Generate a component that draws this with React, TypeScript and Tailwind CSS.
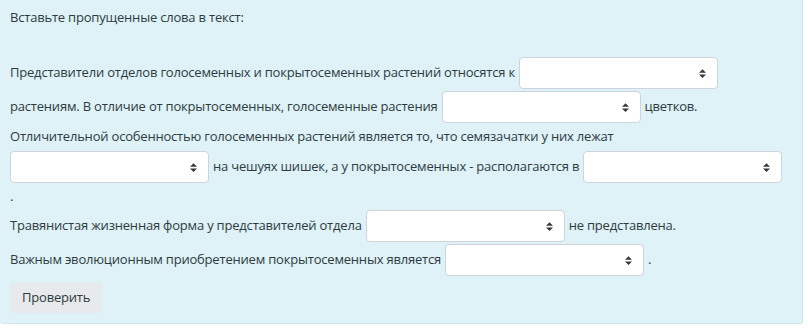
function Arrows() {
    return (
        <svg width="7" height="9" viewBox="0 0 4 5" className="shrink-0">
            <path d="M2 0L0 2h4zm0 5L0 3h4z" fill="#343a40"/>
        </svg>
    )
}

function Gap() {
    return (
        <div className="w-[199px] h-[32px] shrink-0 bg-white border border-[#ced4da] rounded-[4px] flex items-center justify-end pr-[11px]">
            <Arrows/>
        </div>
    )
}

export default function App() {
    return (
        <div className="w-[808px] h-[333px] bg-white">
            <div
                className="w-[803px] h-[324px] bg-[#def2f8] border-r border-b border-[#d3e6ec] rounded-b-[3px] px-[10px] pt-[7px] text-[13px] tracking-[-0.2px] text-[#2f3b3e] whitespace-nowrap"
                style={{fontFamily: '"Segoe UI", "Open Sans", sans-serif'}}
            >
                <p className="h-[20px] leading-[20px]">Вставьте пропущенные слова в текст:</p>
                <div className="h-[29px]"/>
                <div className="h-[34px] flex items-center gap-[4px]">
                    <span>Представители отделов голосеменных и покрытосеменных растений относятся к</span>
                    <Gap/>
                </div>
                <div className="h-[34px] flex items-center gap-[4px]">
                    <span>растениям. В отличие от покрытосеменных, голосеменные растения</span>
                    <Gap/>
                    <span>цветков.</span>
                </div>
                <div className="h-[26px] flex items-center">
                    <span>Отличительной особенностью голосеменных растений является то, что семязачатки у них лежат</span>
                </div>
                <div className="h-[34px] flex items-center gap-[4px]">
                    <Gap/>
                    <span>на чешуях шишек, а у покрытосеменных - располагаются в</span>
                    <Gap/>
                </div>
                <div className="h-[25px] flex items-center">
                    <span>.</span>
                </div>
                <div className="h-[34px] flex items-center gap-[4px]">
                    <span>Травянистая жизненная форма у представителей отдела</span>
                    <Gap/>
                    <span>не представлена.</span>
                </div>
                <div className="h-[34px] flex items-center gap-[4px]">
                    <span>Важным эволюционным приобретением покрытосеменных является</span>
                    <Gap/>
                    <span>.</span>
                </div>
                <button className="mt-[6px] h-[30px] px-[12px] bg-[#e6eaed] rounded-[2px] text-[#2f3b3e]">
                    Проверить
                </button>
            </div>
        </div>
    )
}
